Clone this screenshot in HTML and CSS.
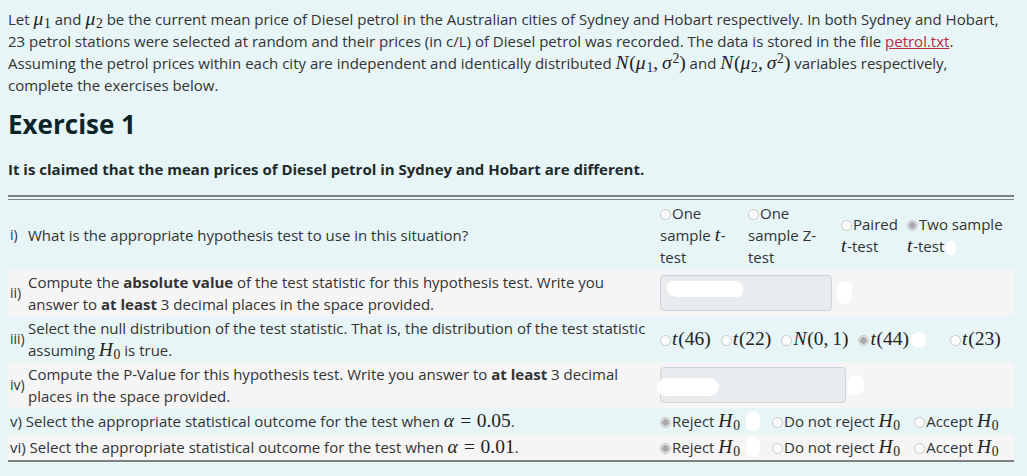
FILE: index.html
```html
<!DOCTYPE html>
<html>
<head>
<meta charset="utf-8">
<link rel="stylesheet" href="styles.css">
</head>
<body>
<p class="intro">Let <span class="m"><i>μ</i><sub>1</sub></span> and <span class="m"><i>μ</i><sub>2</sub></span> be the current mean price of Diesel petrol in the Australian cities of Sydney and Hobart respectively. In both Sydney and Hobart, 23 petrol stations were selected at random and their prices (in c/L) of Diesel petrol was recorded. The data is stored in the file <a class="link" href="#">petrol.txt</a>. Assuming the petrol prices within each city are independent and identically distributed <span class="m"><i class="cal">N</i>(<i>μ</i><sub>1</sub>,<span class="thin"></span><i>σ</i><sup>2</sup>)</span> and <span class="m"><i class="cal">N</i>(<i>μ</i><sub>2</sub>,<span class="thin"></span><i>σ</i><sup>2</sup>)</span> variables respectively, complete the exercises below.</p>

<h2 class="title">Exercise 1</h2>

<p class="claim">It is claimed that the mean prices of Diesel petrol in Sydney and Hobart are different.</p>

<div class="sheet">
<table class="qs">
  <tr class="row-a">
    <td class="q"><div class="multi"><span class="num">i)</span><span class="txt">What is the appropriate hypothesis test to use in this situation?</span></div></td>
    <td class="a">
      <div class="tests">
        <label class="opt o1"><span class="radio"></span>One sample <span class="m"><i>t</i></span>-test</label>
        <label class="opt o2"><span class="radio"></span>One sample Z-test</label>
        <label class="opt o3"><span class="radio"></span>Paired <span class="m"><i>t</i></span>-test</label>
        <label class="opt o4"><span class="radio on"></span>Two sample <span class="m"><i>t</i></span>-test<span class="blob b-test"></span></label>
      </div>
    </td>
  </tr>
  <tr class="row-b">
    <td class="q tight"><div class="multi"><span class="num">ii)</span><span class="txt">Compute the <b>absolute value</b> of the test statistic for this hypothesis test. Write you answer to <b>at least</b> 3 decimal places in the space provided.</span></div></td>
    <td class="a">
      <div class="line">
        <span class="field f1"><span class="blob b-in1"></span></span><span class="blob b-after1"></span>
      </div>
    </td>
  </tr>
  <tr class="row-a">
    <td class="q tight"><div class="multi"><span class="num">iii)</span><span class="txt">Select the null distribution of the test statistic. That is, the distribution of the test statistic assuming <span class="m"><i>H</i><sub>0</sub></span> is true.</span></div></td>
    <td class="a">
      <div class="line dists">
        <label class="opt"><span class="radio"></span><span class="m"><i>t</i>(46)</span></label>
        <label class="opt"><span class="radio"></span><span class="m"><i>t</i>(22)</span></label>
        <label class="opt"><span class="radio"></span><span class="m"><i class="cal">N</i>(0,<span class="thin"></span>1)</span></label>
        <label class="opt"><span class="radio on"></span><span class="m"><i>t</i>(44)</span><span class="blob b-dist"></span></label>
        <label class="opt last"><span class="radio"></span><span class="m"><i>t</i>(23)</span></label>
      </div>
    </td>
  </tr>
  <tr class="row-b">
    <td class="q tight"><div class="multi"><span class="num">iv)</span><span class="txt">Compute the P-Value for this hypothesis test. Write you answer to <b>at least</b> 3 decimal places in the space provided.</span></div></td>
    <td class="a">
      <div class="line">
        <span class="field f2"><span class="blob b-in2"></span></span><span class="blob b-after2"></span>
      </div>
    </td>
  </tr>
  <tr class="row-a">
    <td class="q">v) Select the appropriate statistical outcome for the test when <span class="m"><i>α</i><span class="rel">=</span>0.05</span>.</td>
    <td class="a">
      <div class="line outs">
        <label class="opt rej"><span class="radio on"></span>Reject <span class="m"><i>H</i><sub>0</sub></span><span class="blob b-rej"></span></label>
        <label class="opt mid"><span class="radio"></span>Do not reject <span class="m"><i>H</i><sub>0</sub></span></label>
        <label class="opt"><span class="radio"></span>Accept <span class="m"><i>H</i><sub>0</sub></span></label>
      </div>
    </td>
  </tr>
  <tr class="row-b">
    <td class="q">vi) Select the appropriate statistical outcome for the test when <span class="m"><i>α</i><span class="rel">=</span>0.01</span>.</td>
    <td class="a">
      <div class="line outs">
        <label class="opt rej"><span class="radio on"></span>Reject <span class="m"><i>H</i><sub>0</sub></span><span class="blob b-rej"></span></label>
        <label class="opt mid"><span class="radio"></span>Do not reject <span class="m"><i>H</i><sub>0</sub></span></label>
        <label class="opt"><span class="radio"></span>Accept <span class="m"><i>H</i><sub>0</sub></span></label>
      </div>
    </td>
  </tr>
</table>
</div>
</body>
</html>
```

FILE: styles.css
```css
html, body {
  background: #e7f5f7;
}
body {
  margin: 8px;
  font-family: "Open Sans", "Noto Sans", sans-serif;
  font-size: 15px;
  color: #333;
}
.intro {
  margin: 0;
  width: 1004px;
  line-height: 22px;
}
.link {
  color: #b82a3d;
  text-decoration: underline;
}
.m {
  font-family: "Liberation Serif", serif;
  font-size: 1.3em;
  line-height: 0;
  font-style: normal;
  color: #222;
}
.m i {
  font-style: italic;
  margin-right: 0.04em;
}
.m sub, .m sup {
  font-size: 0.7em;
  line-height: 0;
  font-style: normal;
}
.m sub { vertical-align: -0.25em; }
.m sup { vertical-align: 0.45em; }
.thin {
  display: inline-block;
  width: 0.2em;
}
.rel {
  margin: 0 0.28em;
}
.cal {
  font-family: "Liberation Serif", serif;
  font-style: italic;
}
.title {
  margin: 10px 0 0;
  font-size: 26px;
  font-weight: 700;
  line-height: 36px;
  color: #0c2427;
}
.claim {
  margin: 16px 0 0;
  font-weight: 700;
  color: #1e2a2b;
  line-height: 22px;
}
.sheet {
  margin-top: 15px;
  width: 1006px;
  border-top: 2px solid #808080;
  padding-top: 2px;
}
.qs {
  width: 100%;
  border-collapse: collapse;
  border-top: 1px solid #808080;
  border-bottom: 2px solid #808080;
}
.qs td {
  padding: 2px 2px;
  vertical-align: middle;
  line-height: 22px;
}
.qs td.tight {
  padding-top: 1px;
  padding-bottom: 1px;
}
.row-a { background: #e7f5f7; }
.row-b { background: #f5f5f5; }
.q {
  width: 644px;
}
.qs td.a {
  padding-left: 4px;
}
.multi {
  display: flex;
  align-items: center;
}
.num {
  width: 18px;
  flex: none;
  font-size: 14px;
}
.txt {
  flex: 1;
}
.tests {
  display: grid;
  grid-template-columns: 88px 93px 66px 100px;
  align-items: center;
}
.opt {
  display: inline-block;
  white-space: normal;
}
.o1 { width: 84px; }
.o2 { width: 86px; }
.o3 { width: 62px; }
.o4 { width: 104px; }
.radio {
  display: inline-block;
  width: 11px;
  height: 11px;
  box-sizing: border-box;
  border: 1px solid #c9c9c9;
  border-radius: 50%;
  background: #fbfbfb;
  vertical-align: -1px;
  margin-right: 1px;
}
.radio.on {
  border-color: #c2c2c2;
  background: radial-gradient(circle, #a9a9a9 0 3px, #e4e4e4 3.6px);
}
.line {
  display: flex;
  align-items: center;
  white-space: nowrap;
}
.field {
  position: relative;
  display: inline-block;
  height: 36px;
  box-sizing: border-box;
  background: #e9ecef;
  border: 1px solid #ced4da;
  border-radius: 4px;
}
.f1 { width: 172px; }
.f2 { width: 186px; }
.blob {
  display: inline-block;
  background: #fff;
}
.b-in1 {
  position: absolute;
  left: 6px;
  top: 5px;
  width: 76px;
  height: 16px;
  border-radius: 8px 10px 8px 12px;
}
.b-in2 {
  position: absolute;
  left: -4px;
  top: 10px;
  width: 62px;
  height: 18px;
  border-radius: 9px;
}
.b-after1 {
  width: 15px;
  height: 22px;
  margin-left: 5px;
  border-radius: 6px 6px 9px 9px;
}
.b-after2 {
  width: 16px;
  height: 20px;
  margin-left: 2px;
  border-radius: 9px 9px 9px 4px;
}
.b-test {
  width: 10px;
  height: 14px;
  margin-left: 2px;
  border-radius: 6px;
  vertical-align: -3px;
}
.dists .opt {
  margin-right: 10px;
}
.b-dist {
  width: 15px;
  height: 16px;
  margin-left: 2px;
  border-radius: 8px;
  vertical-align: -3px;
}
.dists .last {
  margin-left: 14px;
}
.outs .opt {
  margin-right: 10px;
  white-space: nowrap;
  flex: none;
}
.outs .rej {
  margin-right: 12px;
}
.outs .mid {
  margin-right: 14px;
}
.b-rej {
  width: 14px;
  height: 20px;
  margin-left: 6px;
  border-radius: 7px;
  vertical-align: -4px;
}
```
